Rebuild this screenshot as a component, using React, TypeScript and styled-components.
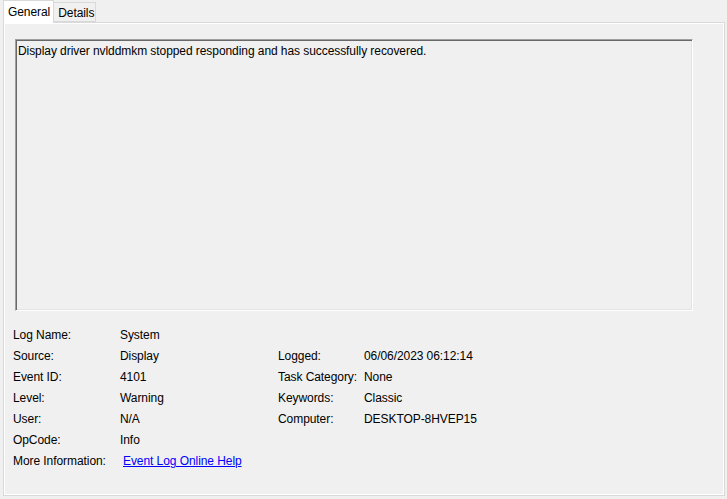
import React from "react";
import styled, { createGlobalStyle } from "styled-components";

const Global = createGlobalStyle`
  html, body { margin: 0; padding: 0; background: #f0f0f0; }
  body { font-family: "Liberation Sans", Arial, sans-serif; font-size: 12px; letter-spacing: -0.07px; color: #000; }
`;

const Window = styled.div`
  width: 727px;
  height: 499px;
  background: #f0f0f0;
  box-sizing: border-box;
  padding: 0 2px 0 3px;
  display: flex;
  flex-direction: column;
`;

const TabStrip = styled.div`
  display: flex;
  align-items: flex-end;
  height: 22px;
  position: relative;
  z-index: 1;
`;

const Tab = styled.div<{ $active?: boolean }>`
  box-sizing: border-box;
  height: ${(p) => (p.$active ? "23px" : "20px")};
  padding: ${(p) => (p.$active ? "0 3px 0 4px" : "1px 1px 0 4px")};
  display: flex;
  align-items: center;
  border: 1px solid #d9d9d9;
  border-bottom: ${(p) => (p.$active ? "none" : "1px solid #d9d9d9")};
  background: ${(p) => (p.$active ? "#ffffff" : "#f0f0f0")};
  margin-left: ${(p) => (p.$active ? "0" : "-1px")};
  margin-bottom: ${(p) => (p.$active ? "-1px" : "0")};
  line-height: 1;
`;

const Panel = styled.div`
  box-sizing: border-box;
  width: 722px;
  height: 474px;
  border: 1px solid #d9d9d9;
  box-shadow: inset 1px 1px 0 #ffffff, inset -1px -1px 0 #ffffff;
  padding: 16px 0 0 11px;
  display: flex;
  flex-direction: column;
`;

const DescBox = styled.div`
  box-sizing: border-box;
  width: 678px;
  height: 272px;
  border-top: 1px solid #a0a0a0;
  border-left: 1px solid #a0a0a0;
  border-right: 1px solid #ffffff;
  border-bottom: 1px solid #ffffff;
  box-shadow: inset 1px 1px 0 #696969, inset -1px -1px 0 #e3e3e3;
  padding: 4px 2px;
  line-height: 15px;
`;

const InfoGrid = styled.div`
  display: grid;
  grid-template-columns: 107px 158px 86px auto;
  grid-auto-rows: 21px;
  margin-top: 14px;
  margin-left: -2px;
  align-items: center;
  line-height: 15px;
`;

const Cell = styled.div`
  white-space: nowrap;
`;

const Link = styled.a`
  color: #0000ff;
  text-decoration: underline;
  margin-left: 3px;
  cursor: pointer;
`;

const left: [string, string][] = [
  ["Log Name:", "System"],
  ["Source:", "Display"],
  ["Event ID:", "4101"],
  ["Level:", "Warning"],
  ["User:", "N/A"],
  ["OpCode:", "Info"],
];

const right: ([string, string] | null)[] = [
  null,
  ["Logged:", "06/06/2023 06:12:14"],
  ["Task Category:", "None"],
  ["Keywords:", "Classic"],
  ["Computer:", "DESKTOP-8HVEP15"],
  null,
];

export default function App() {
  return (
    <>
      <Global />
      <Window>
        <TabStrip>
          <Tab $active>General</Tab>
          <Tab>Details</Tab>
        </TabStrip>
        <Panel>
          <DescBox>
            Display driver nvlddmkm stopped responding and has successfully recovered.
          </DescBox>
          <InfoGrid>
            {left.map((row, i) => (
              <React.Fragment key={i}>
                <Cell>{row[0]}</Cell>
                <Cell>{row[1]}</Cell>
                <Cell>{right[i] ? right[i]![0] : ""}</Cell>
                <Cell>{right[i] ? right[i]![1] : ""}</Cell>
              </React.Fragment>
            ))}
            <Cell>More Information:</Cell>
            <Cell style={{ gridColumn: "2 / span 3" }}>
              <Link>Event Log Online Help</Link>
            </Cell>
          </InfoGrid>
        </Panel>
      </Window>
    </>
  );
}
